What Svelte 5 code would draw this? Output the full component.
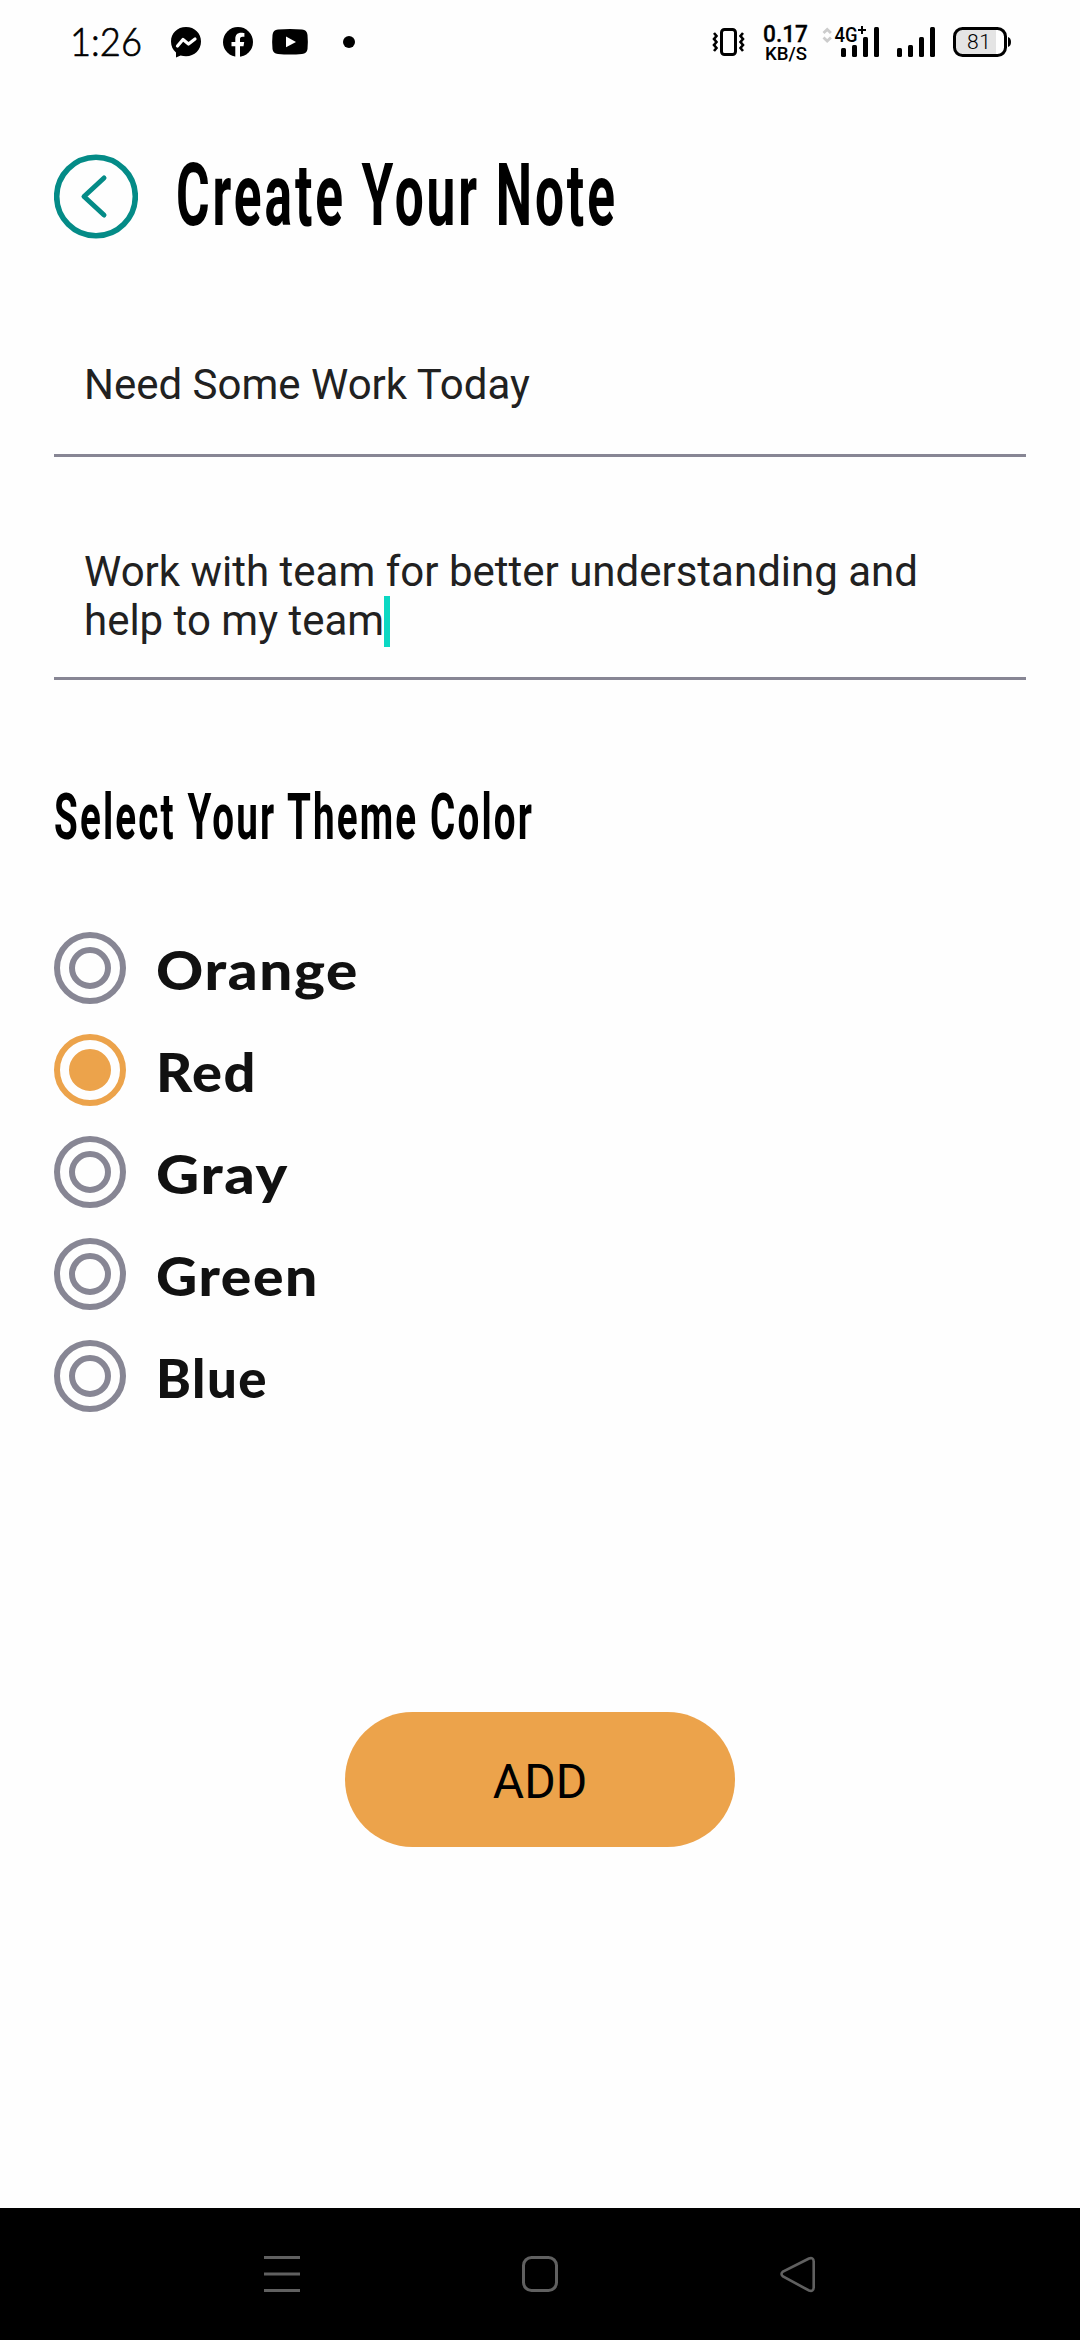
<script>
  const options = [
    { name: 'Orange', w: 203 },
    { name: 'Red', w: 101 },
    { name: 'Gray', w: 133 },
    { name: 'Green', w: 163 },
    { name: 'Blue', w: 112 }
  ];
  let selected = $state('Red');
</script>

<div class="screen">
  <header class="status">
    <svg width="300" height="84" viewBox="60 0 300 84">
      <text class="clock" x="70" y="55.500" textLength="72" lengthAdjust="spacingAndGlyphs">1:26</text>
      <path d="M186 27c-8.700 0-15 6.300-15 14.600 0 4.500 1.800 8.300 5 10.900v5l4.600-2c1.700.5 3.500.8 5.400.8 8.700 0 15-6.300 15-14.700S194.700 27 186 27z" />
      <path d="M177.500 46l5.500-6.500 5.500 4.500 6.500-5" fill="none" stroke="#fff" stroke-width="3.200" stroke-linejoin="round" stroke-linecap="round" />
      <circle cx="238" cy="42" r="15" />
      <path d="M235.300 58V46.300h-3.800V42h3.800v-3.300c0-4 2.300-6 5.900-6 1.600 0 3.200.3 3.200.3v3.700h-1.900c-1.900 0-2.500 1.100-2.500 2.300v3h4.200l-.7 4.300H240V58z" fill="#fff" />
      <path d="M278 29.600q12-1 24 0 5 .4 5.500 5.400.7 7 0 14-.5 4.600-5.500 5-12 1-24 0-5-.4-5.500-5-.7-7 0-14 .5-5 5.500-5.400z" />
      <path d="M286 36.500v10.800l10-5.400z" fill="#fff" />
      <circle cx="349" cy="42" r="6" />
    </svg>
    <svg width="310" height="84" viewBox="708 0 310 84">
      <rect x="721.500" y="29.500" width="14" height="25" rx="3" fill="none" stroke="#000" stroke-width="3" />
      <path d="M714 33l2.500 3-2.500 3 2.500 3-2.500 3 2.500 3-2.500 3M743 33l-2.500 3 2.500 3-2.500 3 2.500 3-2.500 3 2.500 3" fill="none" stroke="#000" stroke-width="2.600" />
      <text class="rate" x="763" y="42" textLength="45" lengthAdjust="spacingAndGlyphs">0.17</text>
      <text class="unit" x="765" y="59.500" textLength="42" lengthAdjust="spacingAndGlyphs">KB/S</text>
      <path d="M823.500 33l3.700-3.500 3.700 3.500M823.500 37.500l3.700 3.500 3.700-3.500" fill="none" stroke="#ccc" stroke-width="2.800" />
      <text class="net" x="834.500" y="42" textLength="23" lengthAdjust="spacingAndGlyphs">4G</text>
      <path d="M862 26v8M858 30h8" stroke="#000" stroke-width="2" />
      {#each [0, 56] as dx}
        <rect x={841 + dx} y="48" width="5" height="9" rx="1.500" />
        <rect x={852 + dx} y="45" width="5" height="12" rx="1.500" />
        <rect x={863 + dx} y="37" width="5" height="20" rx="1.500" />
        <rect x={874 + dx} y="27" width="5" height="30" rx="1.500" />
      {/each}
      <path d="M996 29h-33q-8 0-8 8v10q0 8 8 8h33z" fill="#e4e4e4" />
      <rect x="954.500" y="28.500" width="51" height="27" rx="8" fill="none" stroke="#000" stroke-width="3" />
      <path d="M1008 37q3 1 3 5t-3 5z" />
      <text class="charge" x="967" y="49" textLength="24" lengthAdjust="spacing">81</text>
    </svg>
  </header>

  <main>
    <div class="heading">
      <svg width="84" height="86" viewBox="0 0 84 86" fill="none" stroke="#048b87" stroke-linecap="round" stroke-linejoin="round">
        <circle cx="42" cy="42.500" r="39.300" stroke-width="5.600" />
        <path d="M50 24L30 42.500l20 18.500" stroke-width="5" />
      </svg>
      <h1>Create Your Note</h1>
    </div>

    <div class="field first">Need Some Work Today</div>
    <div class="field second">Work with team for better understanding and<br />help to my team<span class="caret"></span></div>

    <h2>Select Your Theme Color</h2>

    <div class="options">
      {#each options as o}
        <button class="option" class:on={selected === o.name} onclick={() => (selected = o.name)}>
          <span class="radio"><span class="inner"></span></span>
          <svg width="240" height="74" viewBox="0 0 240 74">
            <text class="label" x="1" y="58" textLength={o.w} lengthAdjust="spacingAndGlyphs">{o.name}</text>
          </svg>
        </button>
      {/each}
    </div>

    <button class="add">ADD</button>
  </main>

  <nav>
    <svg width="1080" height="132" viewBox="0 0 1080 132" fill="none" stroke="#606060" stroke-width="3">
      <path d="M264 49.500h36M264 66h36M264 82.500h36" />
      <rect x="523.500" y="49.500" width="33" height="33" rx="8" />
      <path d="M809 50.500L783 63.500q-3 2.500 0 5L809 82.500q4.500 1.500 4.700-3V53.500q-.2-4.500-4.700-3z" stroke-width="2.600" />
    </svg>
  </nav>
</div>

<style>
  :global(body) {
    margin: 0;
    background: #fefefe;
  }
  .screen {
    width: 1080px;
    height: 2340px;
    display: flex;
    flex-direction: column;
    background: #fefefe;
    font-family: Roboto, sans-serif;
    overflow: hidden;
  }
  svg {
    display: block;
    flex: none;
  }
  .status {
    height: 84px;
    flex: none;
    display: flex;
    justify-content: space-between;
    padding: 0 62px 0 60px;
  }
  .clock {
    font: 300 38.500px Lato, sans-serif;
    stroke: #000;
    stroke-width: 0.7px;
  }
  .rate {
    font: 500 24px Roboto, sans-serif;
    stroke: #000;
    stroke-width: 0.3px;
  }
  .unit {
    font: 500 19px Roboto, sans-serif;
  }
  .net {
    font: 500 20px Roboto, sans-serif;
  }
  .charge {
    font: 300 21px Roboto, sans-serif;
  }
  main {
    flex: 1;
    display: flex;
    flex-direction: column;
    padding: 56px 54px 0;
  }
  .heading {
    display: flex;
    align-items: center;
    gap: 38px;
    height: 110px;
    padding-top: 3px;
    box-sizing: border-box;
  }
  h1,
  h2 {
    margin: 0;
    width: max-content;
    font-weight: 700;
    color: #000;
    white-space: nowrap;
    transform-origin: 0 50%;
  }
  h1 {
    font-size: 88px;
    line-height: 104px;
    padding-bottom: 3px;
    letter-spacing: 5px;
    transform: scaleX(0.584);
  }
  .field {
    box-sizing: border-box;
    border-bottom: 3px solid #878694;
    padding-left: 30px;
    font-size: 42px;
    line-height: 49px;
    color: #212121;
    white-space: nowrap;
  }
  .first {
    margin-top: 110px;
    height: 97px;
  }
  .second {
    margin-top: 90px;
    height: 133px;
  }
  .caret {
    display: inline-block;
    width: 6px;
    height: 51px;
    margin: -2px 0;
    vertical-align: -10px;
    background: #0bd8c3;
  }
  h2 {
    margin-top: 99px;
    height: 71px;
    font-size: 65px;
    line-height: 76px;
    letter-spacing: 3.6px;
    transform: scaleX(0.594);
  }
  .options {
    display: flex;
    flex-direction: column;
    align-items: flex-start;
    gap: 30px;
    margin-top: 82px;
  }
  button {
    border: 0;
    background: none;
    padding: 0;
    font-family: inherit;
  }
  .option {
    display: flex;
    gap: 29px;
    height: 72px;
  }
  .radio,
  .inner {
    box-sizing: border-box;
    border: 6px solid #878694;
    border-radius: 50%;
  }
  .radio {
    width: 72px;
    height: 72px;
    display: grid;
    place-items: center;
  }
  .inner {
    width: 42px;
    height: 42px;
  }
  .on .radio,
  .on .inner {
    border-color: #eca34b;
  }
  .on .inner {
    background: #eca34b;
  }
  .label {
    font: 900 54px Lato, sans-serif;
    letter-spacing: 1.5px;
    fill: #111;
  }
  .add {
    width: 390px;
    height: 135px;
    margin: 300px auto 0;
    padding-top: 4px;
    border-radius: 68px;
    background: #eca34b;
    font-size: 48px;
    color: #000;
  }
  nav {
    height: 132px;
    flex: none;
    background: #000;
  }
</style>
